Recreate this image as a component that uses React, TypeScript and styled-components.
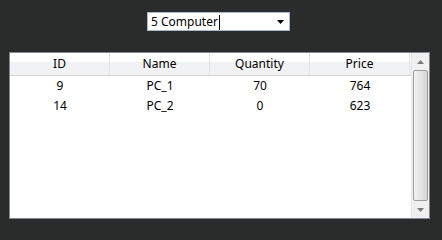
import React from 'react';
import styled, { createGlobalStyle } from 'styled-components';

const GlobalStyle = createGlobalStyle`
    html, body {
        margin: 0;
        padding: 0;
        background: #2a2c2b;
    }
    body {
        font-family: 'Noto Sans', 'Open Sans', sans-serif;
        font-size: 12px;
        color: #000;
    }
`;

interface Product {
    id: number;
    name: string;
    quantity: number;
    price: number;
}

const products: Product[] = [
    { id: 9, name: 'PC_1', quantity: 70, price: 764 },
    { id: 14, name: 'PC_2', quantity: 0, price: 623 },
];

const columns = ['ID', 'Name', 'Quantity', 'Price'];

const Page = styled.div`
    width: 442px;
    height: 240px;
    box-sizing: border-box;
    padding: 12px 0 0 9px;
    display: flex;
    flex-direction: column;
    align-items: flex-start;
`;

const Combo = styled.div`
    margin-left: 138px;
    width: 143px;
    height: 19px;
    box-sizing: border-box;
    border: 1px solid #a9b8cf;
    background: #fff;
    display: flex;
    align-items: center;
    padding: 0 0 0 3px;
`;

const ComboText = styled.span`
    flex: 1;
    line-height: 17px;
    font-size: 12px;
    white-space: nowrap;
`;

const Caret = styled.span`
    display: inline-block;
    width: 1px;
    height: 15px;
    background: #000;
    vertical-align: middle;
    margin-left: 1px;
`;

const ArrowBox = styled.div`
    width: 17px;
    height: 100%;
    display: flex;
    align-items: center;
    justify-content: center;
`;

const Table = styled.div`
    margin-top: 21px;
    width: 421px;
    height: 167px;
    box-sizing: border-box;
    border: 1px solid #828790;
    background: #fff;
    display: flex;
`;

const Content = styled.div`
    flex: 1;
    display: flex;
    flex-direction: column;
`;

const HeaderRow = styled.div`
    display: grid;
    grid-template-columns: repeat(4, 100px);
    height: 22px;
    border-bottom: 1px solid #d5d5d5;
    background: linear-gradient(#ffffff 0%, #ffffff 40%, #f1f2f4 42%, #f1f2f4 100%);
`;

const HeaderCell = styled.div`
    display: flex;
    align-items: center;
    justify-content: center;
    border-right: 1px solid #e3e4e6;
    line-height: 22px;
`;

const Row = styled.div`
    display: grid;
    grid-template-columns: repeat(4, 100px);
    height: 20px;
`;

const Cell = styled.div`
    text-align: center;
    line-height: 20px;
`;

const Scrollbar = styled.div`
    width: 17px;
    display: flex;
    flex-direction: column;
    background: #f0f0f0;
    border-left: 1px solid #e8e8e8;
`;

const ScrollButton = styled.div`
    height: 17px;
    display: flex;
    align-items: center;
    justify-content: center;
`;

const Thumb = styled.div`
    flex: 1;
    margin: 0 1px;
    border: 1px solid #9e9e9e;
    border-radius: 2px;
    background: linear-gradient(to right, #f2f2f2 0%, #e4e4e4 50%, #d6d6d6 100%);
`;

const Triangle: React.FC<{ up?: boolean; color?: string }> = ({ up, color = '#5f5f5f' }) => (
    <svg width="7" height="4" viewBox="0 0 7 4">
        <polygon points={up ? '3.5,0 7,4 0,4' : '0,0 7,0 3.5,4'} fill={color} />
    </svg>
);

export default function App() {
    return (
        <>
            <GlobalStyle />
            <Page>
                <Combo>
                    <ComboText>
                        5 Computer
                        <Caret />
                    </ComboText>
                    <ArrowBox>
                        <Triangle color="#000" />
                    </ArrowBox>
                </Combo>
                <Table>
                    <Content>
                        <HeaderRow>
                            {columns.map((c) => (
                                <HeaderCell key={c}>{c}</HeaderCell>
                            ))}
                        </HeaderRow>
                        {products.map((p) => (
                            <Row key={p.id}>
                                <Cell>{p.id}</Cell>
                                <Cell>{p.name}</Cell>
                                <Cell>{p.quantity}</Cell>
                                <Cell>{p.price}</Cell>
                            </Row>
                        ))}
                    </Content>
                    <Scrollbar>
                        <ScrollButton>
                            <Triangle up color="#7a7a7a" />
                        </ScrollButton>
                        <Thumb />
                        <ScrollButton>
                            <Triangle color="#7a7a7a" />
                        </ScrollButton>
                    </Scrollbar>
                </Table>
            </Page>
        </>
    );
}
